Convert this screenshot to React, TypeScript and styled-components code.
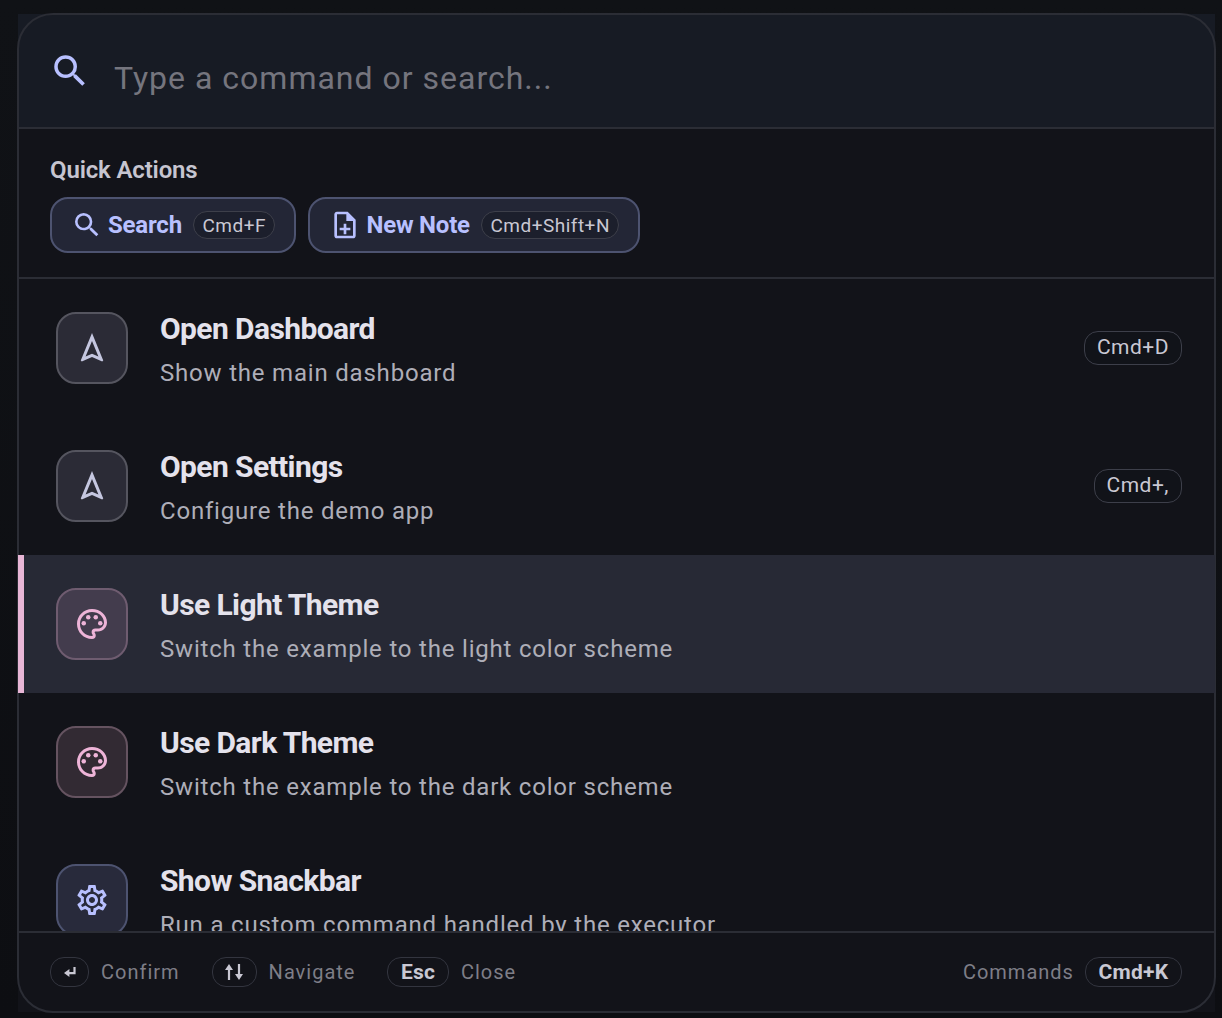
import React from 'react';
import styled, { createGlobalStyle } from 'styled-components';
import {
	MdSearch,
	MdOutlineNoteAdd,
	MdOutlineNavigation,
	MdOutlinePalette,
	MdOutlineSettings,
} from 'react-icons/md';

const GlobalStyle = createGlobalStyle`
	html, body {
		margin: 0;
		padding: 0;
		background: #0e0f13;
		font-family: Roboto, "Liberation Sans", sans-serif;
		overflow: hidden;
	}
	* {
		box-sizing: border-box;
	}
`;

const Page = styled.div`
	width: 1222px;
	height: 1018px;
	padding: 13px 6px 5px 17px;
	background: linear-gradient(#101216, #0d0e12);
`;

const Panel = styled.div`
	position: relative;
	width: 100%;
	height: 100%;
	padding: 1px;
	background: #121319;
	display: flex;
	flex-direction: column;
	border-radius: 36px;

	&::after {
		content: '';
		position: absolute;
		inset: 0;
		border: 2px solid #2b2d35;
		border-radius: 36px;
		pointer-events: none;
	}
`;

const SearchBar = styled.div`
	height: 115px;
	flex: none;
	display: flex;
	align-items: center;
	padding: 14px 0 0 31px;
	gap: 23px;
	background: #171b24;
	border-bottom: 2px solid #2b2d35;
	color: #b8c0ff;
`;

const SearchIconWrap = styled.div`
	display: flex;
	margin-top: -14px;
`;

const Placeholder = styled.div`
	font-size: 32px;
	letter-spacing: 1px;
	color: #75757e;
`;

const QuickSection = styled.section`
	height: 150px;
	flex: none;
	padding: 26px 32px 0;
	border-bottom: 2px solid #2b2d35;
`;

const SectionLabel = styled.div`
	font-size: 24px;
	font-weight: 600;
	line-height: 30px;
	letter-spacing: -0.15px;
	color: #c6c5d0;
`;

const QuickRow = styled.div`
	display: flex;
	gap: 12px;
	margin-top: 12px;
`;

const QuickButton = styled.div`
	height: 56px;
	display: flex;
	align-items: center;
	padding: 0 19px 0 19px;
	gap: 5px;
	background: #232636;
	border: 2px solid #4d5370;
	border-radius: 18px;
	color: #b8c0ff;
`;

const QuickLabel = styled.span`
	font-size: 24px;
	font-weight: 700;
	letter-spacing: -0.2px;
	margin-right: 6px;
`;

const Key = styled.span`
	display: inline-flex;
	align-items: center;
	justify-content: center;
	height: 28px;
	padding: 0 8.5px;
	font-size: 19px;
	letter-spacing: 0.5px;
	color: #c9c8d3;
	background: rgba(18, 19, 25, 0.35);
	border: 1px solid #3d3f4a;
	border-radius: 14px;
`;

const RowKey = styled(Key)`
	height: 34px;
	padding: 0 12px 2px;
	font-size: 21px;
`;

const List = styled.div`
	flex: 1;
	min-height: 0;
	overflow: hidden;
	position: relative;
	z-index: 1;
`;

const Row = styled.div<{ $selected?: boolean }>`
	height: 138px;
	display: flex;
	align-items: center;
	padding: 0 33px 0 ${(p) => (p.$selected ? 32 : 38)}px;
	background: ${(p) => (p.$selected ? '#272935' : 'transparent')};
	border-left: ${(p) => (p.$selected ? '6px solid #e8b6d6' : 'none')};
`;

const tones = {
	nav: { bg: '#2b2b36', border: '#55555f', color: '#c5c7e0' },
	pinkSelected: { bg: '#433c4d', border: '#6f5c70', color: '#eeb4d8' },
	pink: { bg: '#322a33', border: '#655360', color: '#eeb4d8' },
	gear: { bg: '#282a3b', border: '#4d5370', color: '#b8c0ff' },
};

const IconBox = styled.div<{ $tone: keyof typeof tones }>`
	width: 72px;
	height: 72px;
	flex: none;
	display: flex;
	align-items: center;
	justify-content: center;
	background: ${(p) => tones[p.$tone].bg};
	border: 2px solid ${(p) => tones[p.$tone].border};
	border-radius: 20px;
	color: ${(p) => tones[p.$tone].color};
`;

const RowText = styled.div`
	flex: 1;
	margin-left: 32px;
	padding-top: 5px;
`;

const RowTitle = styled.div`
	font-size: 30px;
	font-weight: 700;
	line-height: 34px;
	letter-spacing: -0.6px;
	color: #e4e2ec;
`;

const RowSubtitle = styled.div`
	font-size: 24px;
	line-height: 32px;
	letter-spacing: 0.8px;
	margin-top: 11px;
	color: #aeaeb8;
`;

const Footer = styled.footer`
	height: 81px;
	flex: none;
	display: flex;
	align-items: center;
	padding: 0 33px 2px 32px;
	background: #121319;
	border-top: 2px solid #2b2d35;
`;

const Hint = styled.div`
	display: flex;
	align-items: center;
	gap: 12px;
	margin-right: 32px;
`;

const HintText = styled.span`
	font-size: 20px;
	letter-spacing: 1px;
	color: #7e7e87;
`;

const FooterKey = styled.span`
	display: inline-flex;
	align-items: center;
	justify-content: center;
	height: 30px;
	padding: 0 12.5px;
	font-size: 21px;
	font-weight: 700;
	letter-spacing: 0.3px;
	color: #c9c8d3;
	border: 1px solid #33353f;
	border-radius: 14px;
`;

const TrailingKey = styled(FooterKey)`
	margin-left: 11px;
`;

const Spacer = styled.div`
	flex: 1;
`;

const ReturnGlyph = () => (
	<svg width="12" height="10" viewBox="0 0 12 10" fill="currentColor">
		<path d="M9.4 0h2.2v7.2H5.4V10L0 6l5.4-4v3h4z" />
	</svg>
);

const ArrowsGlyph = () => (
	<svg width="18" height="16" viewBox="0 0 18 16" fill="currentColor">
		<path d="M4 0l4 6H5.1v10H2.9V6H0z" />
		<path d="M14 16l-4-6h2.9V0h2.2v10H18z" />
	</svg>
);

const commands = [
	{ title: 'Open Dashboard', subtitle: 'Show the main dashboard', tone: 'nav', Icon: MdOutlineNavigation, shortcut: 'Cmd+D' },
	{ title: 'Open Settings', subtitle: 'Configure the demo app', tone: 'nav', Icon: MdOutlineNavigation, shortcut: 'Cmd+,' },
	{ title: 'Use Light Theme', subtitle: 'Switch the example to the light color scheme', tone: 'pinkSelected', Icon: MdOutlinePalette, selected: true },
	{ title: 'Use Dark Theme', subtitle: 'Switch the example to the dark color scheme', tone: 'pink', Icon: MdOutlinePalette },
	{ title: 'Show Snackbar', subtitle: 'Run a custom command handled by the executor', tone: 'gear', Icon: MdOutlineSettings },
] as const;

export default function App() {
	return (
		<Page>
			<GlobalStyle />
			<Panel>
				<SearchBar>
					<SearchIconWrap>
						<MdSearch size={42} />
					</SearchIconWrap>
					<Placeholder>Type a command or search...</Placeholder>
				</SearchBar>
				<QuickSection>
					<SectionLabel>Quick Actions</SectionLabel>
					<QuickRow>
						<QuickButton>
							<MdSearch size={32} />
							<QuickLabel>Search</QuickLabel>
							<Key>Cmd+F</Key>
						</QuickButton>
						<QuickButton>
							<MdOutlineNoteAdd size={32} />
							<QuickLabel>New Note</QuickLabel>
							<Key>Cmd+Shift+N</Key>
						</QuickButton>
					</QuickRow>
				</QuickSection>
				<List>
					{commands.map((c) => (
						<Row key={c.title} $selected={'selected' in c}>
							<IconBox $tone={c.tone}>
								<c.Icon size={36} />
							</IconBox>
							<RowText>
								<RowTitle>{c.title}</RowTitle>
								<RowSubtitle>{c.subtitle}</RowSubtitle>
							</RowText>
							{'shortcut' in c && <RowKey>{c.shortcut}</RowKey>}
						</Row>
					))}
				</List>
				<Footer>
					<Hint>
						<FooterKey>
							<ReturnGlyph />
						</FooterKey>
						<HintText>Confirm</HintText>
					</Hint>
					<Hint>
						<FooterKey>
							<ArrowsGlyph />
						</FooterKey>
						<HintText>Navigate</HintText>
					</Hint>
					<Hint>
						<FooterKey>Esc</FooterKey>
						<HintText>Close</HintText>
					</Hint>
					<Spacer />
					<HintText>Commands</HintText>
					<TrailingKey>Cmd+K</TrailingKey>
				</Footer>
			</Panel>
		</Page>
	);
}
